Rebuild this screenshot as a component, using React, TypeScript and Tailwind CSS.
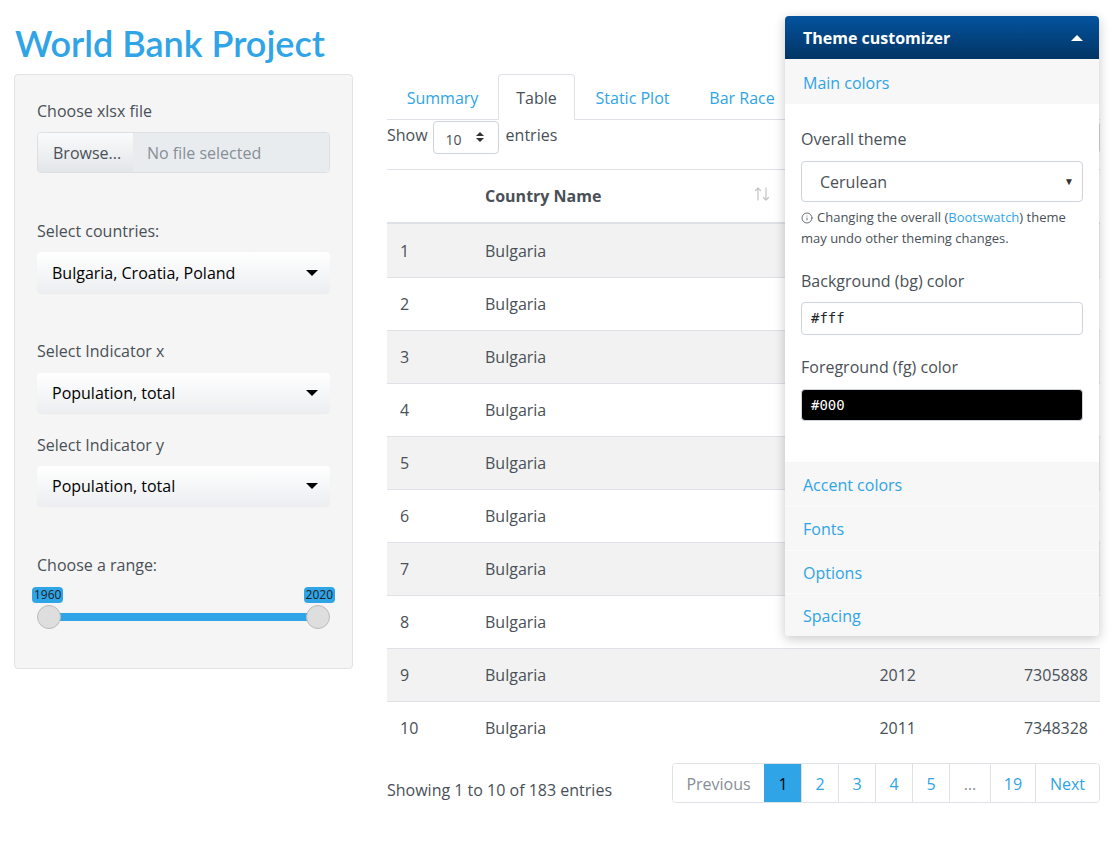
import React from 'react';
import { Info } from 'lucide-react';

const rows: [number, string, number, number][] = [
    [1, 'Bulgaria', 2020, 6934015],
    [2, 'Bulgaria', 2019, 6975761],
    [3, 'Bulgaria', 2018, 7025037],
    [4, 'Bulgaria', 2017, 7075947],
    [5, 'Bulgaria', 2016, 7127822],
    [6, 'Bulgaria', 2015, 7177991],
    [7, 'Bulgaria', 2014, 7223938],
    [8, 'Bulgaria', 2013, 7265115],
    [9, 'Bulgaria', 2012, 7305888],
    [10, 'Bulgaria', 2011, 7348328],
];

function Caret() {
    return <span className="h-0 w-0 border-x-[6px] border-t-[6px] border-x-transparent border-t-black" />;
}

function SortIcon() {
    return (
        <svg width="16" height="14" viewBox="0 0 16 14" fill="none" stroke="#c4c4c4" strokeWidth="1.2" strokeLinecap="round" strokeLinejoin="round">
            <path d="M4 13V1M1.5 3.5L4 1l2.5 2.5" />
            <path d="M12 1v12M9.5 10.5L12 13l2.5-2.5" />
        </svg>
    );
}

function SelectBox({ value, h }: { value: string; h: string }) {
    return (
        <div className={`flex ${h} items-center justify-between rounded bg-gradient-to-b from-white to-[#eceef1] pl-[15px] pr-[12px] text-black shadow-[0_1px_1px_rgba(0,0,0,0.04)]`}>
            <span>{value}</span>
            <Caret />
        </div>
    );
}

function Sidebar() {
    return (
        <div className="h-[595px] w-[339px] shrink-0 rounded border border-[#e3e3e3] bg-[#f5f5f5] px-[22px] pt-[24px]">
            <div className="mb-[9px] leading-6">Choose xlsx file</div>
            <div className="flex h-[41px] overflow-hidden rounded border border-[#dcdfe3]">
                <div className="flex w-[95px] items-center bg-gradient-to-b from-[#f9fafb] to-[#e3e6e9] pl-[15px] text-[#495057]">Browse...</div>
                <div className="flex flex-1 items-center bg-[#e9ecef] pl-[14px] text-[#868e96]">No file selected</div>
            </div>

            <div className="mb-[9px] mt-[46px] leading-6">Select countries:</div>
            <SelectBox value="Bulgaria, Croatia, Poland" h="h-[41px]" />

            <div className="mb-[10px] mt-[46px] leading-6">Select Indicator x</div>
            <SelectBox value="Population, total" h="h-[40px]" />

            <div className="mb-[9px] mt-[20px] leading-6">Select Indicator y</div>
            <SelectBox value="Population, total" h="h-[40px]" />

            <div className="mt-[47px] leading-6">Choose a range:</div>
            {/* range slider */}
            <div className="relative mt-[10px] h-[44px]">
                <span className="absolute left-[-5px] top-0 rounded-sm bg-[#2fa4e7] px-[2px] text-[12px] leading-4 text-[#222]">1960</span>
                <span className="absolute right-[-5px] top-0 rounded-sm bg-[#2fa4e7] px-[2px] text-[12px] leading-4 text-[#222]">2020</span>
                <div className="absolute left-[11px] right-[12px] top-[26px] h-[8px] bg-[#2fa4e7]" />
                <div className="absolute left-0 top-[18px] h-[24px] w-[24px] rounded-full border border-[#bbb] bg-[#dedede]" />
                <div className="absolute right-0 top-[18px] h-[24px] w-[24px] rounded-full border border-[#bbb] bg-[#dedede]" />
            </div>
        </div>
    );
}

function Tabs() {
    return (
        <div className="flex h-[46px] border-b border-[#dee2e6]">
            <div className="flex w-[111px] items-center justify-center pt-[2px] text-[#2fa4e7]">Summary</div>
            <div className="-mb-px flex w-[77px] items-center justify-center rounded-t border border-[#dee2e6] border-b-white bg-white pt-[2px] text-[#495057]">Table</div>
            <div className="flex w-[115px] items-center justify-center pt-[2px] text-[#2fa4e7]">Static Plot</div>
            <div className="flex w-[104px] items-center justify-center pt-[2px] text-[#2fa4e7]">Bar Race</div>
        </div>
    );
}

function DataTable() {
    const cols = 'grid grid-cols-[85px_308px_148px_172px]';
    return (
        <div className="mt-[15px]">
            <div className={`${cols} h-[55px] border-y border-b-2 border-t-[#dee2e6] border-b-[#dee2e6] font-bold text-[#495057]`}>
                <div />
                <div className="relative flex items-center pl-[13px]">
                    Country Name
                    <span className="absolute right-[10px] top-[17px]">
                        <SortIcon />
                    </span>
                </div>
                <div />
                <div />
            </div>
            {rows.map(([i, name, year, val], k) => (
                <div
                    key={i}
                    className={`${cols} items-center ${k === 0 ? 'h-[53px]' : 'h-[53px] border-t border-[#dee2e6]'} ${k % 2 === 0 ? 'bg-[#f2f2f2]' : 'bg-white'}`}
                >
                    <div className="pl-[13px]">{i}</div>
                    <div className="pl-[13px]">{name}</div>
                    <div className="pr-[12px] text-right">{year}</div>
                    <div className="pr-[12px] text-right">{val}</div>
                </div>
            ))}
        </div>
    );
}

function Pagination() {
    const items: { label: string; w: string; active?: boolean; muted?: boolean }[] = [
        { label: 'Previous', w: 'w-[91px]', muted: true },
        { label: '1', w: 'w-[37px]', active: true },
        { label: '2', w: 'w-[37px]' },
        { label: '3', w: 'w-[37px]' },
        { label: '4', w: 'w-[37px]' },
        { label: '5', w: 'w-[37px]' },
        { label: '…', w: 'w-[41px]', muted: true },
        { label: '19', w: 'w-[45px]' },
        { label: 'Next', w: 'w-[64px]' },
    ];
    return (
        <div className="flex h-[40px] overflow-hidden rounded border border-[#dee2e6]">
            {items.map((it, idx) => (
                <div
                    key={idx}
                    className={`flex ${it.w} items-center justify-center pt-[2px] ${idx > 0 ? 'border-l border-[#dee2e6]' : ''} ${
                        it.active ? 'border-l-[#2fa4e7] bg-[#2fa4e7] text-black' : it.muted ? 'bg-white text-[#868e96]' : 'bg-white text-[#2fa4e7]'
                    }`}
                >
                    {it.label}
                </div>
            ))}
        </div>
    );
}

function MainPanel() {
    return (
        <div className="ml-[34px] w-[713px] shrink-0">
            <Tabs />
            <div className="flex h-[34px] items-center justify-between">
                <div className="flex items-center">
                    <span className="pb-[4px]">Show</span>
                    <div className="ml-[5px] flex h-[33px] w-[66px] items-center justify-between rounded border border-[#ced4da] pl-[12px] pr-[14px] pt-[4px] text-[14px]">
                        <span>10</span>
                        <span className="flex flex-col items-center gap-[2px] pb-[4px]">
                            <span className="h-0 w-0 border-x-[4px] border-b-[4px] border-x-transparent border-b-[#333]" />
                            <span className="h-0 w-0 border-x-[4px] border-t-[4px] border-x-transparent border-t-[#333]" />
                        </span>
                    </div>
                    <span className="ml-[7px] pb-[4px]">entries</span>
                </div>
                <div className="h-[33px] w-[170px] rounded border border-[#ced4da]" />
            </div>
            <DataTable />
            <div className="mt-[9px] flex justify-between">
                <div className="pt-[15px] leading-6">Showing 1 to 10 of 183 entries</div>
                <Pagination />
            </div>
        </div>
    );
}

function Customizer() {
    const sections = [
        { label: 'Accent colors', h: 'h-[44px]' },
        { label: 'Fonts', h: 'h-[44px]' },
        { label: 'Options', h: 'h-[43px]' },
        { label: 'Spacing', h: 'h-[43px]' },
    ];
    return (
        <div className="absolute left-[785px] top-[16px] w-[314px] overflow-hidden rounded bg-white shadow-[0_3px_12px_rgba(0,0,0,0.22)]">
            <div className="flex h-[43px] items-center justify-between bg-gradient-to-b from-[#04539f] to-[#023565] pl-[18px] pr-[16px] font-bold text-white">
                <span>Theme customizer</span>
                <span className="h-0 w-0 border-x-[6px] border-b-[6px] border-x-transparent border-b-white" />
            </div>
            <div className="flex h-[45px] items-center bg-[#f7f7f7] pl-[18px] pt-[3px] text-[#2fa4e7]">Main colors</div>
            <div className="h-[358px] bg-white px-[16px] pt-[23px]">
                <div className="mb-[10px] leading-6">Overall theme</div>
                <div className="flex h-[41px] items-center justify-between rounded border border-[#ced4da] pl-[18px] pr-[8px]">
                    <span>Cerulean</span>
                    <span className="text-[10px] text-[#333]">▼</span>
                </div>
                <div className="mt-[5px] text-[13px] leading-[21px]">
                    <Info size={12} strokeWidth={1.6} className="mb-[2px] mr-[4px] inline-block text-[#495057]" />
                    Changing the overall (<span className="text-[#2fa4e7]">Bootswatch</span>) theme may undo other theming changes.
                </div>
                <div className="mb-[9px] mt-[20px] leading-6">Background (bg) color</div>
                <div className="flex h-[33px] items-center rounded border border-[#ced4da] pl-[9px] font-['DejaVu_Sans_Mono',monospace] text-[14px] text-[#212529]">#fff</div>
                <div className="mb-[10px] mt-[20px] leading-6">Foreground (fg) color</div>
                <div className="flex h-[32px] items-center rounded border border-[#ced4da] bg-black pl-[9px] font-['DejaVu_Sans_Mono',monospace] text-[14px] text-white">#000</div>
            </div>
            {sections.map((s, i) => (
                <div key={s.label} className={`flex ${s.h} items-center bg-[#f7f7f7] pl-[18px] pt-[1px] text-[#2fa4e7] ${i > 0 ? 'border-t border-[#fbfbfb]' : ''}`}>
                    {s.label}
                </div>
            ))}
        </div>
    );
}

export default function App() {
    return (
        <div className="relative min-h-[859px] bg-white px-[14px] font-['Open_Sans',sans-serif] text-[16px] text-[#495057]">
            <div className="h-[74px] pt-[21px]">
                <h1 className="pl-[1px] font-['Lato',sans-serif] text-[36px] font-semibold leading-[44px] text-[#2fa4e7]">World Bank Project</h1>
            </div>
            <div className="flex">
                <Sidebar />
                <MainPanel />
            </div>
            <Customizer />
        </div>
    );
}
